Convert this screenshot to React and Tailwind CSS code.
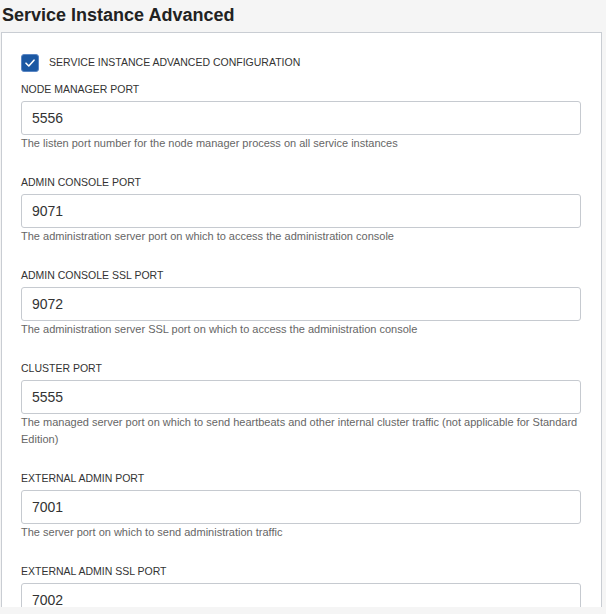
import React from "react";

const fields = [
  { label: "NODE MANAGER PORT", value: "5556", help: "The listen port number for the node manager process on all service instances" },
  { label: "ADMIN CONSOLE PORT", value: "9071", help: "The administration server port on which to access the administration console" },
  { label: "ADMIN CONSOLE SSL PORT", value: "9072", help: "The administration server SSL port on which to access the administration console" },
  { label: "CLUSTER PORT", value: "5555", help: "The managed server port on which to send heartbeats and other internal cluster traffic (not applicable for Standard Edition)" },
  { label: "EXTERNAL ADMIN PORT", value: "7001", help: "The server port on which to send administration traffic" },
  { label: "EXTERNAL ADMIN SSL PORT", value: "7002", help: "" },
];

export default function App() {
  return (
    <div className="h-[614px] w-[606px] bg-[#f5f5f5] overflow-hidden" style={{ fontFamily: '"Liberation Sans", Arial, sans-serif' }}>
      <div className="h-[607px] overflow-hidden">
        <div className="h-[32px] pl-[2px] leading-[30px] text-[18px] font-bold text-[#222]">Service Instance Advanced</div>
        <div className="ml-[1px] w-[601px] bg-white border border-[#c9cdd3] pt-[21px] pl-[19px] pr-[20px]">
          <div className="flex items-center h-[18px]">
            <div className="w-[18px] h-[18px] rounded-[3px] bg-[#1b58a3] border border-[#5a86c4] flex items-center justify-center">
              <svg width="12" height="12" viewBox="0 0 12 12">
                <path d="M2 6.2 L4.8 9 L10 3.2" fill="none" stroke="white" strokeWidth="1.6" strokeLinecap="round" strokeLinejoin="round" />
              </svg>
            </div>
            <span className="ml-[10px] text-[10.5px] text-[#333]">SERVICE INSTANCE ADVANCED CONFIGURATION</span>
          </div>
          <div className="mt-[9px]">
            {fields.map((f) => (
              <div key={f.label} className="pb-[22px]">
                <div className="h-[16px] leading-[16px] text-[10.5px] text-[#333]">{f.label}</div>
                <div className="mt-[4px] h-[34px] border border-[#c6cad0] rounded-[3px] flex items-center pl-[10px] text-[14px] text-[#333]">{f.value}</div>
                <div className="leading-[17px] text-[11px] text-[#666] min-h-[17px]">{f.help}</div>
              </div>
            ))}
          </div>
        </div>
      </div>
    </div>
  );
}
